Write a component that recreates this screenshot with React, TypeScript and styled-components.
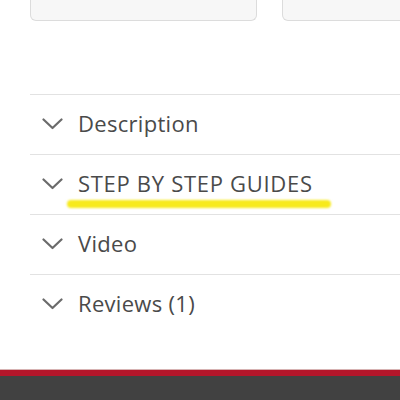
import React from "react";
import styled, { createGlobalStyle } from "styled-components";

const GlobalStyle = createGlobalStyle`
  html, body {
    margin: 0;
    padding: 0;
    background: #ffffff;
  }
  body {
    width: 400px;
    height: 400px;
    overflow: hidden;
    font-family: "Open Sans", "Liberation Sans", sans-serif;
  }
`;

const Page = styled.div`
  display: flex;
  flex-direction: column;
  height: 400px;
`;

const Content = styled.div`
  flex: 1;
  padding-left: 30px;
`;

const CardRow = styled.div`
  display: flex;
  gap: 25px;
  margin-bottom: 73px;
  overflow: hidden;
`;

const Card = styled.div`
  flex: 0 0 225px;
  height: 20px;
  background: #f7f7f7;
  border: 1px solid #dcdcdc;
  border-top: none;
  border-radius: 0 0 6px 6px;
`;

const Accordion = styled.div`
  display: flex;
  flex-direction: column;
`;

const Row = styled.div`
  height: 56px;
  padding: 0 0 3px 12px;
  border-top: 1px solid #e2e2e2;
  display: flex;
  align-items: center;
  gap: 15px;
  color: #4a4a4a;
`;

const Chevron = styled.svg`
  width: 21px;
  height: 12px;
  flex-shrink: 0;
  margin-top: 1px;
`;

const Title = styled.span<{ $marked?: boolean }>`
  position: relative;
  font-size: 22px;
  line-height: 1;
  letter-spacing: ${({ $marked }) => ($marked ? "0.7px" : "0.3px")};

  ${({ $marked }) =>
    $marked &&
    `
    &::after {
      content: "";
      position: absolute;
      left: -11px;
      right: -18px;
      bottom: -14px;
      height: 8px;
      border-radius: 5px;
      background: #f7ea1c;
      filter: blur(1px);
    }
  `}
`;

const Footer = styled.div`
  height: 24px;
  background: #414141;
  border-top: 6px solid #b3162a;
  box-shadow: 0 -1px 0 #d7b3b3;
`;

const items = [
  { label: "Description" },
  { label: "STEP BY STEP GUIDES", marked: true },
  { label: "Video" },
  { label: "Reviews (1)" },
];

const ChevronIcon = () => (
  <Chevron viewBox="0 0 21 12" fill="none">
    <path d="M1.5 1.5 L10.5 10 L19.5 1.5" stroke="#6b6b6b" strokeWidth="2.2" strokeLinecap="round" strokeLinejoin="round" />
  </Chevron>
);

const App = () => {
  return (
    <Page>
      <GlobalStyle />
      <Content>
        <CardRow>
          <Card />
          <Card />
        </CardRow>
        <Accordion>
          {items.map((it) => (
            <Row key={it.label}>
              <ChevronIcon />
              <Title $marked={it.marked}>{it.label}</Title>
            </Row>
          ))}
        </Accordion>
      </Content>
      <Footer />
    </Page>
  );
};

export default App;
